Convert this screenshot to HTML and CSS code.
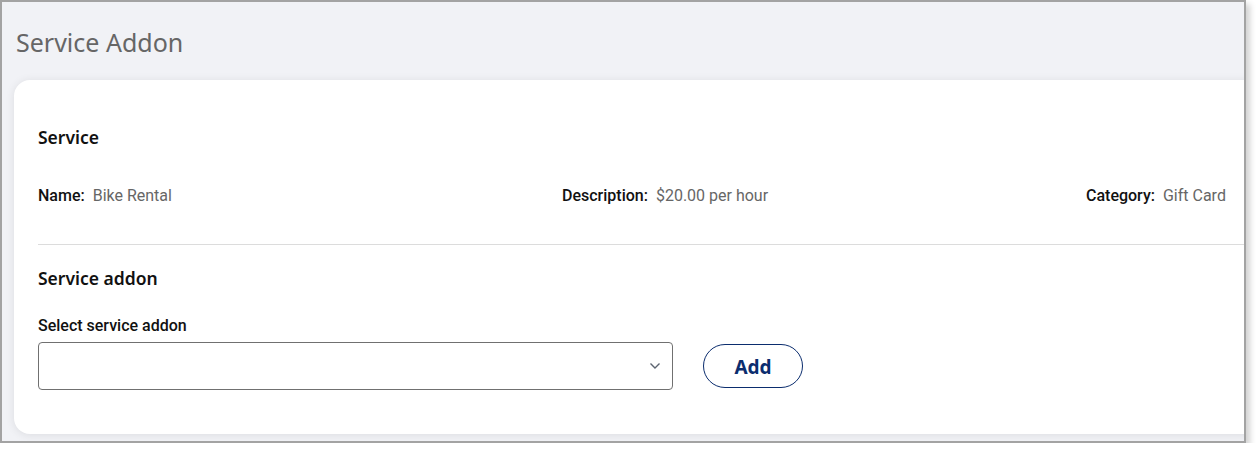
FILE: index.html
```html
<!DOCTYPE html>
<html lang="en">
<head>
    <meta charset="UTF-8">
    <meta name="viewport" content="width=device-width, initial-scale=1.0">
    <title>Service Addon</title>

    <link rel="stylesheet" href="styles.css">
</head>
<body>
    <div class="frame">
        <h1 class="page-title">Service Addon</h1>

        <div class="card">
            <h3 class="section-header">Service</h3>

            <div class="info-row">
                <div class="info-item">
                    <span class="info-label">Name:</span>
                    <span class="info-value">Bike Rental</span>
                </div>
                <div class="info-item">
                    <span class="info-label">Description:</span>
                    <span class="info-value">$20.00 per hour</span>
                </div>
                <div class="info-item">
                    <span class="info-label">Category:</span>
                    <span class="info-value">Gift Card</span>
                </div>
            </div>

            <hr class="divider">

            <h3 class="section-header">Service addon</h3>

            <label class="field-label">Select service addon</label>

            <div class="addon-row">
                <div class="select-box">
                    <svg class="select-arrow" width="12" height="8" viewBox="0 0 12 8">
                        <path d="M1.5 1.5 L6 6 L10.5 1.5" fill="none" stroke="#5c6470" stroke-width="1.4"/>
                    </svg>
                </div>

                <button class="add-button">Add</button>
            </div>
        </div>
    </div>
</body>
</html>
```

FILE: styles.css
```css
body {
    margin: 0;

    background-color: #fff;

    font-family: Roboto, "Liberation Sans", sans-serif;
}

.frame {
    width: 1242px;
    height: 439px;

    overflow: hidden;

    background-color: #f1f2f6;

    border: 2px solid #a3a3a3;
    box-shadow: 4px 4px 6px rgba(0, 0, 0, 0.18);
}

.page-title {
    margin: 0 0 22px;
    padding: 24px 0 0 14px;

    font-family: "Noto Sans", sans-serif;
    font-size: 25px;
    font-weight: 400;
    line-height: 32px;
    color: #666;
}

.card {
    box-sizing: border-box;
    width: 1640px;
    margin-left: 12px;
    padding: 44px 24px 44px;

    background-color: #fff;

    border-radius: 16px;
    box-shadow: 0 1px 10px rgba(0, 0, 0, 0.09);
}

.section-header {
    margin: 0;

    font-family: "Noto Sans", sans-serif;
    font-size: 17.5px;
    font-weight: 600;
    line-height: 26px;
    color: #111;
}

.info-row {
    margin-top: 36px;

    display: grid;
    grid-template-columns: 524px 524px 524px;
}

.info-item {
    font-size: 16px;
    line-height: 20px;
}

.info-label {
    margin-right: 4px;

    font-weight: 500;
    color: #111;
}

.info-value {
    color: #666;
}

.divider {
    margin: 38px 0 20px;

    border: none;
    border-top: 1px solid #dcdcdc;
}

.field-label {
    display: block;
    margin-top: 25px;

    font-size: 16px;
    font-weight: 500;
    line-height: 20px;
    color: #111;
}

.addon-row {
    margin-top: 6px;

    display: flex;
    align-items: center;
}

.select-box {
    box-sizing: border-box;
    width: 635px;
    height: 48px;
    padding-right: 11px;

    display: flex;
    align-items: center;
    justify-content: flex-end;

    border: 1px solid #707070;
    border-radius: 4px;
}

.add-button {
    box-sizing: border-box;
    width: 100px;
    height: 44px;
    margin-left: 30px;
    padding-top: 2px;

    background-color: #fff;

    border: 1px solid #0b2d6e;
    border-radius: 22px;

    font-family: "Noto Sans", sans-serif;
    font-size: 19px;
    font-weight: 700;
    color: #0b2d6e;
}
```
